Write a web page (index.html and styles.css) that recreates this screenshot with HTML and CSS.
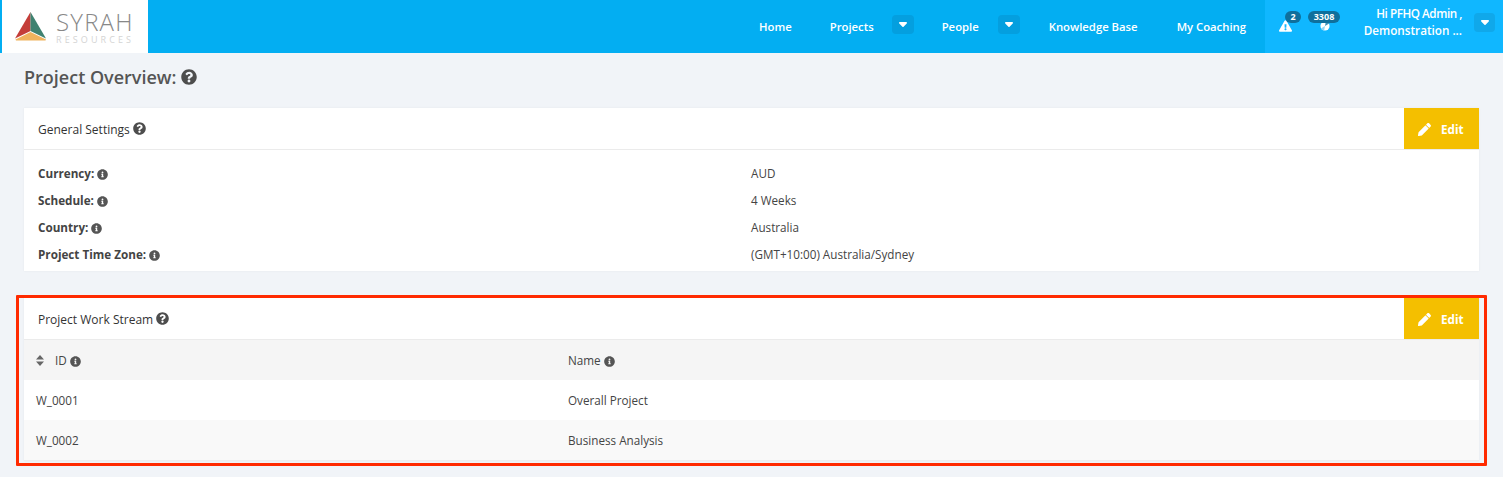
FILE: index.html
```html
<!DOCTYPE html>
<html lang="en">
<head>
<meta charset="utf-8">
<title>Project Overview</title>
<link rel="stylesheet" href="styles.css">
</head>
<body>
<svg class="defs" width="0" height="0" aria-hidden="true">
  <symbol id="i-question" viewBox="0 0 512 512"><path d="M504 256c0 136.997-111.043 248-248 248S8 392.997 8 256C8 119.083 119.043 8 256 8s248 111.083 248 248zM262.655 90c-54.497 0-89.255 22.957-116.549 63.758-3.536 5.286-2.353 12.415 2.715 16.258l34.699 26.31c5.205 3.947 12.621 3.008 16.665-2.122 17.864-22.658 30.113-35.797 57.303-35.797 20.429 0 45.698 13.148 45.698 32.958 0 14.976-12.363 22.667-32.534 33.976C247.128 238.528 216 254.941 216 296v4c0 6.627 5.373 12 12 12h56c6.627 0 12-5.373 12-12v-1.333c0-28.462 83.186-29.647 83.186-106.667 0-58.002-60.165-102-116.531-102zM256 338c-25.365 0-46 20.635-46 46 0 25.364 20.635 46 46 46s46-20.636 46-46c0-25.365-20.635-46-46-46z"/></symbol>
  <symbol id="i-info" viewBox="0 0 512 512"><path d="M256 8C119.043 8 8 119.083 8 256c0 136.997 111.043 248 248 248s248-111.003 248-248C504 119.083 392.957 8 256 8zm0 110c23.196 0 42 18.804 42 42s-18.804 42-42 42-42-18.804-42-42 18.804-42 42-42zm56 254c0 6.627-5.373 12-12 12h-88c-6.627 0-12-5.373-12-12v-24c0-6.627 5.373-12 12-12h12v-64h-12c-6.627 0-12-5.373-12-12v-24c0-6.627 5.373-12 12-12h64c6.627 0 12 5.373 12 12v100h12c6.627 0 12 5.373 12 12v24z"/></symbol>
  <symbol id="i-pencil" viewBox="0 0 512 512"><path d="M497.9 142.1l-46.1 46.1c-4.7 4.7-12.3 4.7-17 0l-111-111c-4.7-4.7-4.7-12.3 0-17l46.1-46.1c18.7-18.7 49.1-18.7 67.9 0l60.1 60.1c18.8 18.7 18.8 49.1 0 67.9zM284.2 99.8L21.6 362.4.4 483.9c-2.9 16.4 11.4 30.6 27.8 27.8l121.5-21.3 262.6-262.6c4.7-4.7 4.7-12.3 0-17l-111-111c-4.8-4.7-12.4-4.7-17.1 0z"/></symbol>
  <symbol id="i-warn" viewBox="0 0 576 512"><path d="M569.517 440.013C587.975 472.007 564.806 512 527.94 512H48.054c-36.937 0-59.999-40.055-41.577-71.987L246.423 23.985c18.467-32.009 64.72-31.951 83.154 0l239.94 416.028zM288 354c-25.405 0-46 20.595-46 46s20.595 46 46 46 46-20.595 46-46-20.595-46-46-46zm-43.673-165.346l7.418 136c.347 6.364 5.609 11.346 11.982 11.346h48.546c6.373 0 11.635-4.982 11.982-11.346l7.418-136c.375-6.874-5.098-12.654-11.982-12.654h-63.383c-6.884 0-12.356 5.78-11.981 12.654z"/></symbol>
  <symbol id="i-caret" viewBox="0 0 10 6"><path d="M1 0h8c.9 0 1.3 1 .7 1.600L5.700 5.700c-.4.4-1 .4-1.400 0L.3 1.600C-.3 1 .1 0 1 0z"/></symbol>
</svg>

<header class="topbar">
  <a class="logo" href="#">
    <svg class="logo-mark" viewBox="0 0 34 30" width="34" height="30" aria-hidden="true">
      <polygon points="16.500,0 16.500,19 1,26.500" fill="#c43e39"/>
      <polygon points="16.500,0 16.500,19 32,26.500" fill="#3f8270"/>
      <polygon points="16.500,20 1.500,27.500 2,28.500 31.500,28.500 32,27.500" fill="#efb35e"/>
    </svg>
    <span class="logo-text">
      <span class="logo-name">SYRAH</span>
      <span class="logo-sub">RESOURCES</span>
    </span>
  </a>
  <nav class="nav">
    <a class="nav-link home" href="#">Home</a>
    <a class="nav-link projects" href="#">Projects</a>
    <button class="caret-btn" type="button"><svg class="caret"><use href="#i-caret"/></svg></button>
    <a class="nav-link people" href="#">People</a>
    <button class="caret-btn" type="button"><svg class="caret"><use href="#i-caret"/></svg></button>
    <a class="nav-link kb" href="#">Knowledge Base</a>
    <a class="nav-link coach" href="#">My Coaching</a>
  </nav>
  <div class="user-area">
    <div class="alert">
      <svg class="warn"><use href="#i-warn"/></svg>
      <span class="badge badge-one">2</span>
    </div>
    <div class="alert alert-sync">
      <svg class="sync" viewBox="0 0 12 12" aria-hidden="true">
        <circle cx="6" cy="6" r="5.500" fill="#fff"/>
        <path d="M6 6 L11 3 A5.500 5.500 0 0 0 7 .5 Z" fill="#3d8fb5"/>
        <path d="M6 6 L1 9 A5.500 5.500 0 0 0 5 11.500 Z" fill="#8fd6f5"/>
      </svg>
      <span class="badge badge-two">3308</span>
    </div>
    <div class="greeting">
      <span class="greet-first">Hi PFHQ Admin ,</span>
      <span>Demonstration ...</span>
    </div>
    <button class="caret-btn caret-user" type="button"><svg class="caret"><use href="#i-caret"/></svg></button>
  </div>
</header>

<main class="page">
  <h1 class="page-title">Project Overview: <svg class="ico-title"><use href="#i-question"/></svg></h1>

  <section class="card settings">
    <div class="card-head">
      <h2 class="card-title">General Settings <svg class="ico-q"><use href="#i-question"/></svg></h2>
      <button class="edit" type="button"><svg class="ico-pencil"><use href="#i-pencil"/></svg>Edit</button>
    </div>
    <dl class="props">
      <dt>Currency: <svg class="ico-i"><use href="#i-info"/></svg></dt><dd>AUD</dd>
      <dt>Schedule: <svg class="ico-i"><use href="#i-info"/></svg></dt><dd>4 Weeks</dd>
      <dt>Country: <svg class="ico-i"><use href="#i-info"/></svg></dt><dd>Australia</dd>
      <dt>Project Time Zone: <svg class="ico-i"><use href="#i-info"/></svg></dt><dd>(GMT+10:00) Australia/Sydney</dd>
    </dl>
  </section>

  <div class="annotated">
    <section class="card streams">
      <div class="card-head">
        <h2 class="card-title">Project Work Stream <svg class="ico-q"><use href="#i-question"/></svg></h2>
        <button class="edit" type="button"><svg class="ico-pencil"><use href="#i-pencil"/></svg>Edit</button>
      </div>
      <div class="row row-head">
        <div class="cell-id">
          <svg class="sort" viewBox="0 0 8 11" aria-hidden="true"><path d="M0 4.500h8L4 0zM0 6.500h8L4 11z"/></svg>
          <span>ID</span> <svg class="ico-i"><use href="#i-info"/></svg>
        </div>
        <div>Name <svg class="ico-i"><use href="#i-info"/></svg></div>
      </div>
      <div class="row"><div class="cell-id">W_0001</div><div>Overall Project</div></div>
      <div class="row row-alt"><div class="cell-id">W_0002</div><div>Business Analysis</div></div>
    </section>
  </div>
</main>
</body>
</html>
```

FILE: styles.css
```css
* { box-sizing: border-box; }
html, body { margin: 0; padding: 0; }
body {
  height: 477px;
  overflow: hidden;
  background: #f1f4f8;
  color: #444;
  font-family: "Open Sans", "Liberation Sans", sans-serif;
  font-size: 11.7px;
}
.defs { display: block; height: 0; }
a { color: inherit; text-decoration: none; }
button { font-family: inherit; border: 0; padding: 0; cursor: pointer; }

.topbar {
  display: flex;
  height: 53px;
  padding-left: 2px;
  background: #03aef2;
  color: #fff;
}
.logo {
  display: flex;
  align-items: center;
  width: 146px;
  height: 53px;
  padding: 0 0 0 12px;
  background: #fff;
}
.logo-mark { flex: none; margin-top: 1px; }
.logo-text { display: flex; flex-direction: column; margin-left: 8px; margin-top: 1px; }
.logo-name {
  font-weight: 300;
  font-size: 24px;
  line-height: 21px;
  letter-spacing: 1.2px;
  color: #888;
}
.logo-sub {
  font-size: 9px;
  line-height: 9px;
  letter-spacing: 3.1px;
  color: #d4d4d4;
  margin-top: 3px;
  white-space: nowrap;
}

.nav {
  display: flex;
  align-items: center;
  margin-left: auto;
  height: 53px;
  padding-bottom: 1px;
  font-weight: 600;
  font-size: 11.3px;
}
.nav-link { margin-left: 38px; }
.nav-link.projects { margin-right: 18px; }
.nav-link.people { margin-left: 28px; margin-right: 19px; }
.nav-link.kb { margin-left: 29px; }
.nav-link.coach { margin-left: 39px; margin-right: 19px; }

.caret-btn {
  display: flex;
  align-items: center;
  justify-content: center;
  align-self: flex-start;
  width: 22px;
  height: 19px;
  margin-top: 15px;
  border-radius: 4px;
  background: #049fdf;
}
.caret { width: 8px; height: 5px; fill: #fff; display: block; }

.user-area {
  display: flex;
  align-items: flex-start;
  position: relative;
  width: 238px;
  height: 53px;
  background: #10b7ff;
}
.alert { position: relative; width: 14px; margin: 20px 0 0 13px; }
.alert-sync { margin-left: 27px; }
.warn { display: block; width: 13px; height: 12px; margin-left: 1px; fill: #fff; }
.sync { display: block; width: 10px; height: 10px; margin: 1px 0 0 1px; }
.badge {
  position: absolute;
  top: -9px;
  height: 12px;
  border-radius: 7px;
  background: #0f6f9c;
  color: #fff;
  font-size: 9px;
  font-weight: 700;
  line-height: 12px;
  text-align: center;
}
.badge-one { left: 7px; width: 16px; }
.badge-two { left: -11px; width: 32px; }
.greeting {
  display: flex;
  flex-direction: column;
  align-items: flex-end;
  width: 122px;
  margin: 5px 0 0 7px;
  font-weight: 600;
  font-size: 11.7px;
  line-height: 17px;
}
.greet-first { letter-spacing: -0.45px; }
.caret-user { position: absolute; top: 13px; margin-top: 0; right: 8px; width: 21px; background: #10a8ea; }

.page { padding: 0 24px; }
.page-title {
  display: flex;
  align-items: center;
  gap: 5px;
  margin: 0 0 7px;
  height: 48px;
  font-size: 18px;
  font-weight: 600;
  color: #555;
}
.ico-title { width: 16px; height: 16px; fill: #4d4d4d; }

.card {
  width: 1455px;
  background: #fff;
  box-shadow: 0 0 2px rgba(0, 0, 0, 0.06);
}
.card-head {
  display: flex;
  align-items: center;
  justify-content: space-between;
  height: 42px;
  border-bottom: 1px solid #ebebeb;
}
.card-title {
  margin: 0;
  padding: 2px 0 0 14px;
  font-size: 12px;
  font-weight: 500;
  color: #333;
}
.ico-q { width: 13px; height: 13px; fill: #4d4d4d; vertical-align: -1px; }
.ico-i { width: 11px; height: 11px; fill: #555; vertical-align: -2px; }
.edit {
  display: flex;
  align-items: center;
  align-self: flex-start;
  width: 75px;
  height: 41px;
  padding: 1px 0 0 14px;
  background: #f4bf00;
  color: #fff;
  font-size: 11.7px;
  font-weight: 700;
}
.ico-pencil { width: 13px; height: 13px; fill: #fff; margin-right: 10px; }

.props {
  display: grid;
  grid-template-columns: 713px 1fr;
  grid-auto-rows: 27px;
  align-items: center;
  margin: 0;
  padding: 9px 14px 4px;
}
.props dt { font-weight: 700; color: #444; }
.props dd { margin: 0; color: #444; }

.annotated { position: relative; margin-top: 27px; }
.annotated::after {
  content: "";
  position: absolute;
  inset: -3px -8px -5px -8px;
  border: 3px solid #ff2a00;
  border-radius: 1px;
  pointer-events: none;
}
.row {
  display: grid;
  grid-template-columns: 532px 1fr;
  align-items: center;
  height: 40px;
  padding-left: 12px;
  color: #444;
}
.row-head { background: #f5f5f5; font-weight: 500; }
.row-alt { background: #f9f9f9; border-bottom: 1px solid #ededed; height: 41px; }
.sort { width: 8px; height: 11px; fill: #666; margin-right: 8px; vertical-align: -1px; }
```
